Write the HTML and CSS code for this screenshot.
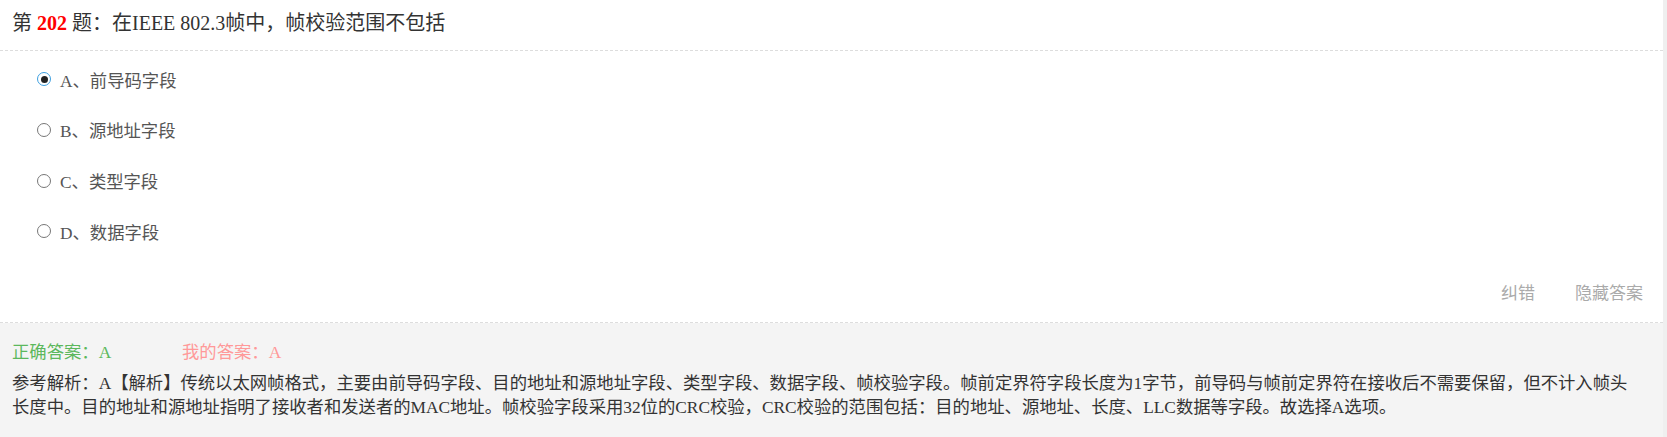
FILE: index.html
```html
<!DOCTYPE html>
<html lang="zh-CN">
<head>
<meta charset="utf-8">
<title>第202题</title>
<link rel="stylesheet" href="styles.css">
</head>
<body>
<div class="page">
  <div class="question">
    <div class="title">第 <b class="num">202</b> 题：在IEEE 802.3帧中，帧校验范围不包括</div>
    <ul class="options">
      <li class="option"><span class="radio checked"></span><span class="opt-text">A、前导码字段</span></li>
      <li class="option"><span class="radio"></span><span class="opt-text">B、源地址字段</span></li>
      <li class="option"><span class="radio"></span><span class="opt-text">C、类型字段</span></li>
      <li class="option"><span class="radio"></span><span class="opt-text">D、数据字段</span></li>
    </ul>
    <div class="actions">
      <span class="action">纠错</span>
      <span class="action">隐藏答案</span>
    </div>
  </div>
  <div class="answer">
    <div class="answer-row">
      <span class="right-answer">正确答案：A</span>
      <span class="my-answer">我的答案：A</span>
    </div>
    <div class="analysis">参考解析：A【解析】传统以太网帧格式，主要由前导码字段、目的地址和源地址字段、类型字段、数据字段、帧校验字段。帧前定界符字段长度为1字节，前导码与帧前定界符在接收后不需要保留，但不计入帧头长度中。目的地址和源地址指明了接收者和发送者的MAC地址。帧校验字段采用32位的CRC校验，CRC校验的范围包括：目的地址、源地址、长度、LLC数据等字段。故选择A选项。</div>
  </div>
</div>
</body>
</html>
```
FILE: styles.css
```css
html, body {
  margin: 0;
  padding: 0;
}
body {
  background: #efefef;
  font-family: "Liberation Serif", "Noto Sans CJK SC", serif;
  color: #333;
}
.page {
  margin-right: 4px;
  height: 437px;
  background: #f4f4f4;
}
.question {
  background: #fff;
  border-bottom: 1px dashed #ddd;
}
.title {
  height: 50px;
  line-height: 46px;
  padding-left: 12px;
  font-size: 20px;
  color: #333;
  border-bottom: 1px dashed #ddd;
}
.num {
  color: #f00;
  font-weight: bold;
}
.options {
  list-style: none;
  margin: 0;
  padding: 3px 0 0 37px;
}
.option {
  display: flex;
  align-items: center;
  height: 50.67px;
  font-size: 17.33px;
  color: #555;
}
.radio {
  box-sizing: border-box;
  width: 14px;
  height: 14px;
  border-radius: 50%;
  border: 1px solid #777;
  background: #fff;
  margin-right: 9px;
  display: flex;
  align-items: center;
  justify-content: center;
}
.radio.checked {
  border: 1.5px solid #3d9fe0;
}
.radio.checked::after {
  content: "";
  width: 7px;
  height: 7px;
  border-radius: 50%;
  background: #222;
}
.actions {
  display: flex;
  justify-content: flex-end;
  gap: 40px;
  height: 65px;
  padding: 0 20px 0 0;
  align-items: center;
  font-family: "Noto Sans CJK SC", sans-serif;
  font-size: 17px;
  color: #aaa;
}
.action {
  margin-top: 4px;
}
.answer {
  padding: 0 21px 0 12px;
}
.answer-row {
  display: flex;
  height: 52px;
  align-items: center;
  font-size: 17.33px;
  padding-top: 3px;
  box-sizing: border-box;
}
.right-answer {
  color: #5cb85c;
  width: 170px;
}
.my-answer {
  color: #f99;
}
.analysis {
  font-size: 17.33px;
  line-height: 24px;
  color: #333;
  margin-top: -3px;
}
```
